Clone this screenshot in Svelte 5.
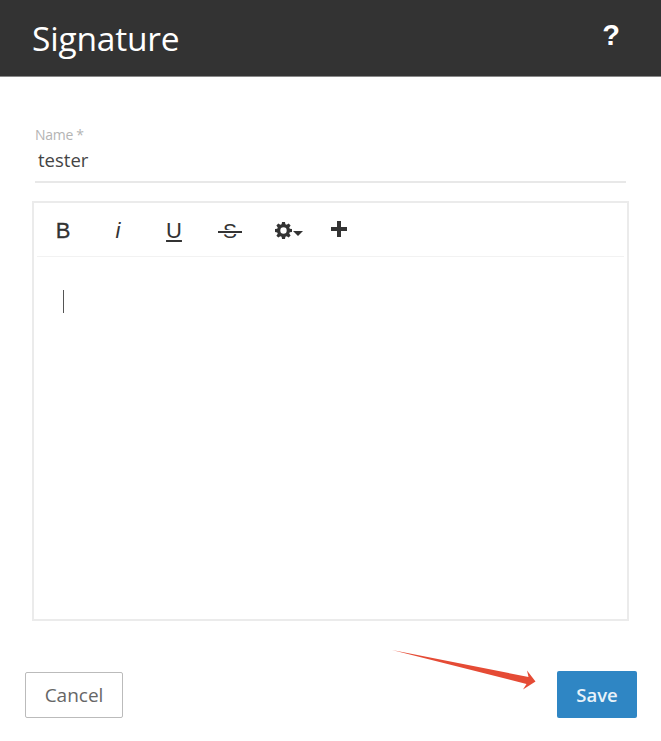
<script>
  const tools = [
    { label: 'B', cls: 'bold' },
    { label: 'i', cls: 'italic' },
    { label: 'U', cls: 'under' },
    { label: 'S', cls: 'strike' }
  ];
</script>

<div class="dialog">
  <header class="head">
    <h1>Signature</h1>
    <span class="help">?</span>
  </header>

  <div class="body">
    <div class="field">
      <span class="label">Name *</span>
      <span class="value">tester</span>
    </div>

    <div class="editor">
      <div class="toolbar">
        {#each tools as t}
          <span class="tool {t.cls}">{t.label}</span>
        {/each}
        <span class="gear-wrap">
          <svg class="gear" viewBox="0 0 16 16" width="16" height="16">
            <path fill="#333" fill-rule="evenodd" d="M6.6 0h2.8l.4 2.2 1.2.5L12.9 1.4l1.8 1.8-1.3 1.9.5 1.2 2.1.4v2.6l-2.1.4-.5 1.2 1.3 1.9-1.8 1.8-1.9-1.3-1.2.5L9.4 16H6.6l-.4-2.1-1.2-.5-1.9 1.3-1.8-1.8 1.3-1.9-.5-1.2L0 9.4V6.7l2.1-.4.5-1.2-1.3-1.9 1.8-1.8L5 2.7l1.2-.5zM8 5a3 3 0 1 0 0 6 3 3 0 0 0 0-6z"/>
          </svg>
          <i class="caret"></i>
        </span>
        <svg class="plus" viewBox="0 0 16 16" width="16" height="16">
          <path fill="#333" d="M6 0h4v6h6v4h-6v6H6v-6H0V6h6z"/>
        </svg>
      </div>
      <div class="content"><i class="cursor"></i></div>
    </div>
  </div>

  <footer class="foot">
    <button class="btn cancel">Cancel</button>
    <button class="btn save">Save</button>
  </footer>

  <svg class="arrow" viewBox="0 0 661 741" width="661" height="741">
    <path fill="#e54b35" d="M392 650 L528.5 677 L527 670.5 L535.5 681.5 L523 689.5 L526.5 684 Z"/>
  </svg>
</div>

<style>
  :global(body) { margin: 0; background: #fff; }
  .dialog {
    position: relative;
    width: 661px;
    height: 741px;
    overflow: hidden;
    display: flex;
    flex-direction: column;
    font-family: "Open Sans", "Noto Sans", sans-serif;
    background: #fff;
  }
  .head {
    flex: none;
    background: #333;
    border-bottom: 1px solid #888;
    display: flex;
    justify-content: space-between;
    padding: 0 40px 0 32px;
    box-sizing: border-box;
    height: 77px;
    color: #fff;
  }
  h1 {
    margin: 17px 0 0;
    font-size: 33.5px;
    line-height: 42px;
    font-weight: 400;
    letter-spacing: -0.2px;
  }
  .help {
    font-family: "Liberation Sans", sans-serif;
    font-weight: 700;
    font-size: 29px;
    line-height: 32px;
    margin-top: 19px;
    margin-right: 1px;
  }
  .body {
    flex: 1;
    padding: 0 32px;
    display: flex;
    flex-direction: column;
  }
  .field {
    margin: 49px 3px 0;
    height: 57px;
    box-sizing: border-box;
    border-bottom: 2px solid #e8e8e8;
    display: flex;
    flex-direction: column;
    width: 591px;
  }
  .label {
    font-size: 14px;
    line-height: 18px;
    color: #b4b4b4;
    letter-spacing: -0.3px;
  }
  .value {
    font-size: 18.5px;
    line-height: 24px;
    color: #444;
    margin-left: 3px;
    margin-top: 4px;
  }
  .editor {
    margin-top: 18px;
    width: 597px;
    height: 420px;
    box-sizing: border-box;
    border: 2px solid #ebebeb;
    padding: 0 3px;
  }
  .toolbar {
    height: 53px;
    border-bottom: 1px solid #f2f2f2;
    display: flex;
    align-items: center;
    color: #333;
  }
  .tool {
    font-family: "Liberation Sans", sans-serif;
    font-size: 22px;
    line-height: 24px;
    width: 20px;
    text-align: center;
    margin-top: 2px;
  }
  .bold { margin-left: 16px; -webkit-text-stroke: 0.3px #333; }
  .italic { margin-left: 35px; font-style: italic; }
  .under { margin-left: 36px; text-decoration: underline; text-underline-offset: 2px; text-decoration-thickness: 2px; }
  .strike { margin-left: 35px; position: relative; font-size: 21px; left: 1px; }
  .strike::after {
    content: "";
    position: absolute;
    left: -2px;
    right: -2px;
    top: 12px;
    height: 2px;
    background: #333;
    box-shadow: 0 -1px 0 #fff, 0 1px 0 #fff;
  }
  .gear-wrap { display: flex; align-items: center; margin-left: 36px; margin-top: 2px; }
  .gear { width: 17px; height: 17px; }
  .caret {
    width: 0; height: 0;
    margin-left: 1px;
    margin-top: 6px;
    border: 5px solid transparent;
    border-top-color: #333;
    border-bottom: 0;
  }
  .plus { margin-left: 28px; width: 16px; height: 16px; margin-top: -1px; }
  .content { padding: 33px 26px 0; }
  .cursor {
    display: block;
    width: 1.4px;
    height: 23px;
    background: #555;
  }
  .foot {
    flex: none;
    height: 70px;
    box-sizing: border-box;
    padding: 0 24px 0 25px;
    display: flex;
    justify-content: space-between;
    align-items: flex-start;
  }
  .btn {
    font-family: inherit;
    font-size: 19px;
    border-radius: 2px;
    box-sizing: border-box;
    padding: 0;
  }
  .cancel {
    width: 98px;
    height: 46px;
    margin-top: 1px;
    background: #fff;
    border: 1px solid #bbb;
    color: #666;
  }
  .save {
    width: 80px;
    height: 47px;
    background: #2f86c4;
    border: none;
    color: #e8f2f9;
    font-size: 18.5px;
    font-weight: 600;
  }
  .arrow { position: absolute; left: 0; top: 0; pointer-events: none; }
</style>
